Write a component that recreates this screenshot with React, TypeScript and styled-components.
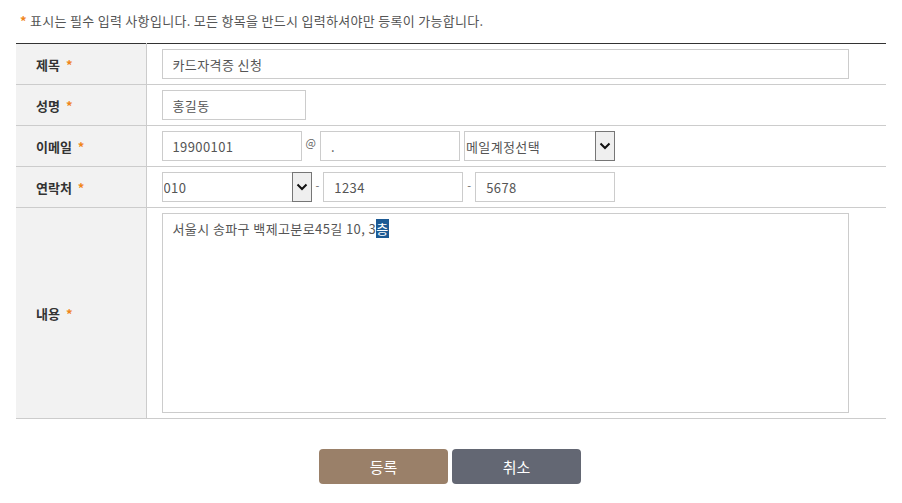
import React from 'react'
import styled, { createGlobalStyle } from 'styled-components'

const GlobalStyle = createGlobalStyle`
  html, body {
    margin: 0;
    padding: 0;
    background: #fff;
  }
  body {
    font-family: 'Noto Sans CJK KR', 'Noto Sans', sans-serif;
    color: #333;
  }
  * {
    box-sizing: border-box;
  }
`

type field = {
  id: string
  label: string
}

const Page = styled.div`
  width: 902px;
  padding: 0 16px;
`

const Notice = styled.p`
  margin: 12px 0 0 4px;
  font-size: 13px;
  line-height: 18px;
  color: #555;
  letter-spacing: 0.3px;
`

const Star = styled.span<{ $gap?: number }>`
  color: #f08519;
  font-weight: 700;
  margin-left: ${(p) => p.$gap ?? 0}px;
  margin-right: 3px;
`

const Table = styled.table`
  width: 870px;
  margin-top: 13px;
  border-collapse: collapse;
  border-top: 1px solid #333;
`

const Row = styled.tr`
  border-bottom: 1px solid #ccc;
`

const Th = styled.th<{ $tall?: boolean }>`
  width: 130px;
  height: ${(p) => (p.$tall ? '211px' : '41px')};
  padding: 0 0 0 20px;
  background: #f2f2f2;
  border-right: 1px solid #ccc;
  text-align: left;
  font-size: 13px;
  font-weight: 700;
  color: #333;
`

const Td = styled.td`
  padding: 0 0 0 15px;
`

const Line = styled.div`
  display: flex;
  align-items: center;
  gap: 4px;
`

const Input = styled.input<{ $w: number }>`
  width: ${(p) => p.$w}px;
  height: 30px;
  padding: 0 10px;
  border: 1px solid #ccc;
  font-family: inherit;
  font-size: 13px;
  letter-spacing: 0.4px;
  color: #555;
  outline: none;
`

const Sep = styled.span<{ $top: number }>`
  align-self: flex-start;
  padding-top: ${(p) => p.$top}px;
  font-size: 11px;
  line-height: 12px;
  color: #666;
`

const SelectBox = styled.div<{ $w: number }>`
  display: flex;
  width: ${(p) => p.$w}px;
  height: 30px;
  border: 1px solid #ccc;
  border-right: 0;
`

const NativeSelect = styled.select`
  flex: 1;
  min-width: 0;
  appearance: none;
  border: 0;
  background: transparent;
  padding: 0 0 0 1px;
  font-family: inherit;
  font-size: 13px;
  letter-spacing: 0.4px;
  color: #555;
  outline: none;
`

const ArrowBox = styled.span`
  display: flex;
  align-items: center;
  justify-content: center;
  width: 20px;
  height: 30px;
  margin-top: -1px;
  border: 1px solid #767676;
  background: #efefef;
`

const Memo = styled.div`
  width: 687px;
  height: 200px;
  padding: 6px 10px;
  border: 1px solid #ccc;
  font-size: 13px;
  letter-spacing: 0.4px;
  line-height: 18px;
  color: #555;
`

const Picked = styled.span`
  background: #1c5a94;
  color: #fff;
`

const Buttons = styled.div`
  display: flex;
  justify-content: center;
  gap: 4px;
  margin-top: 30px;
  padding-right: 2px;
`

const Button = styled.button<{ $tone: 'ok' | 'cancel' }>`
  width: 129px;
  height: 35px;
  border: 0;
  border-radius: 4px;
  background: ${(p) => (p.$tone === 'ok' ? '#9a8069' : '#636773')};
  color: #fff;
  font-family: inherit;
  font-size: 15px;
  cursor: pointer;
`

const Chevron = () => (
  <svg width="12" height="8" viewBox="0 0 12 8">
    <path d="M1.5 1.5 L6 6 L10.5 1.5" fill="none" stroke="#111" strokeWidth="2" />
  </svg>
)

const Select = ({ width, options }: { width: number; options: string[] }) => (
  <SelectBox $w={width}>
    <NativeSelect defaultValue={options[0]}>
      {options.map((o) => (
        <option key={o}>{o}</option>
      ))}
    </NativeSelect>
    <ArrowBox>
      <Chevron />
    </ArrowBox>
  </SelectBox>
)

const Label = ({ text }: { text: string }) => (
  <>
    {text} <Star $gap={3}>*</Star>
  </>
)

const fields: field[] = [
  { id: 'title', label: '제목' },
  { id: 'name', label: '성명' },
  { id: 'email', label: '이메일' },
  { id: 'phone', label: '연락처' },
]

const App = () => {
  return (
    <Page>
      <GlobalStyle />
      <Notice>
        <Star>*</Star>표시는 필수 입력 사항입니다. 모든 항목을 반드시 입력하셔야만 등록이 가능합니다.
      </Notice>

      <Table>
        <tbody>
          <Row>
            <Th>
              <Label text={fields[0].label} />
            </Th>
            <Td>
              <Input $w={687} defaultValue="카드자격증 신청" />
            </Td>
          </Row>
          <Row>
            <Th>
              <Label text={fields[1].label} />
            </Th>
            <Td>
              <Input $w={144} defaultValue="홍길동" />
            </Td>
          </Row>
          <Row>
            <Th>
              <Label text={fields[2].label} />
            </Th>
            <Td>
              <Line>
                <Input $w={140} defaultValue="19900101" />
                <Sep $top={5}>@</Sep>
                <Input $w={140} defaultValue="." />
                <Select width={151} options={['메일계정선택', 'naver.com', 'gmail.com']} />
              </Line>
            </Td>
          </Row>
          <Row>
            <Th>
              <Label text={fields[3].label} />
            </Th>
            <Td>
              <Line>
                <Select width={150} options={['010', '011', '016']} />
                <Sep $top={7}>-</Sep>
                <Input $w={140} defaultValue="1234" />
                <Sep $top={7}>-</Sep>
                <Input $w={140} defaultValue="5678" />
              </Line>
            </Td>
          </Row>
          <Row>
            <Th $tall>
              <Label text="내용" />
            </Th>
            <Td>
              <Memo>
                서울시 송파구 백제고분로45길 10, 3<Picked>층</Picked>
              </Memo>
            </Td>
          </Row>
        </tbody>
      </Table>

      <Buttons>
        <Button $tone="ok">등록</Button>
        <Button $tone="cancel">취소</Button>
      </Buttons>
    </Page>
  )
}

export default App
